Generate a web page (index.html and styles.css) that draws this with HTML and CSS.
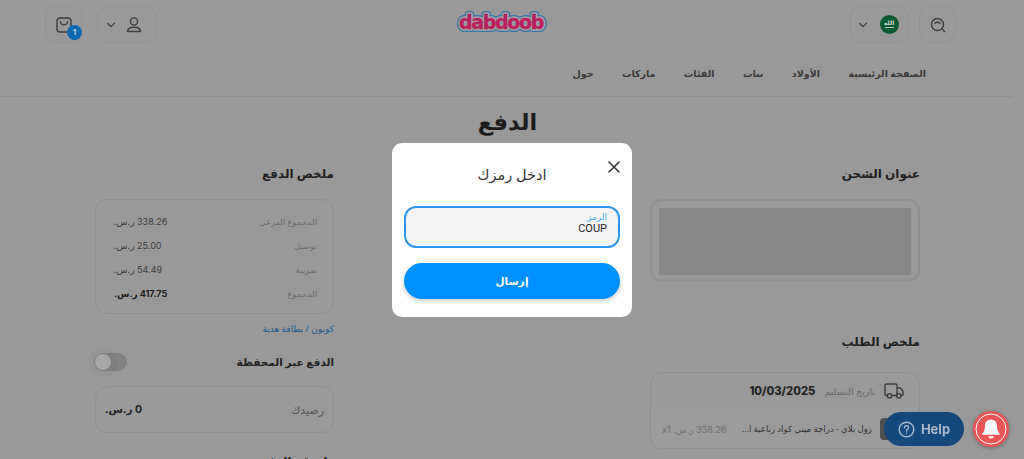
FILE: index.html
```html
<!DOCTYPE html>
<html lang="ar" dir="rtl">
<head>
<meta charset="utf-8">
<title>الدفع</title>
<link rel="stylesheet" href="styles.css">
</head>
<body>
<header class="header">
  <div class="top">
    <div class="group group-start">
      <button class="box box-sq" aria-label="بحث">
        <svg class="ic" viewBox="0 0 18 18" width="18" height="18"><circle cx="8.5" cy="8.5" r="6"/><path d="M5.8 7.2c1.6-1.2 3.8-1.2 5.4 0M13 13l2.6 2.6"/></svg>
      </button>
      <button class="box box-wide">
        <span class="flag"><span class="flag-text">الله</span><span class="flag-sword"></span></span>
        <svg class="chev" viewBox="0 0 10 6" width="10" height="6"><path d="M1.5 1.2 5 4.6l3.5-3.4"/></svg>
      </button>
    </div>
    <svg class="logo" viewBox="0 0 94 26" width="94" height="26" role="img" aria-label="dabdoob">
      <text class="logo-t logo-edge" x="47" y="19.5">dabdoob</text>
      <text class="logo-t logo-gap" x="47" y="19.5">dabdoob</text>
      <text class="logo-t logo-fill" x="47" y="19.5">dabdoob</text>
    </svg>
    <div class="group group-end">
      <button class="box box-wide box-user">
        <svg class="ic" viewBox="0 0 18 18" width="18" height="18"><circle cx="9" cy="5.5" r="3.6"/><path d="M2.5 15.5c0-3 2.600-4.200 6.500-4.200s6.500 1.200 6.500 4.200z"/></svg>
        <svg class="chev" viewBox="0 0 10 6" width="10" height="6"><path d="M1.500 1.200 5 4.600l3.500-3.400"/></svg>
      </button>
      <button class="box box-sq box-cart">
        <svg class="ic" viewBox="0 0 18 18" width="18" height="18"><rect x="2" y="2" width="14" height="14" rx="3"/><path d="M5.500 5.500c.6 4.500 6.400 4.500 7 0"/></svg>
        <span class="badge">1</span>
      </button>
    </div>
  </div>
  <nav class="nav">
    <a>الصفحة الرئيسية</a><a>الأولاد</a><a>بنات</a><a>الفئات</a><a>ماركات</a><a>حول</a>
  </nav>
</header>

<main class="main">
  <h1 class="title">الدفع</h1>
  <div class="cols">
    <section class="col col-main">
      <h2 class="h">عنوان الشحن</h2>
      <div class="card card-address"><div class="skeleton"></div></div>
      <h2 class="h h-order">ملخص الطلب</h2>
      <div class="card card-order">
        <div class="delivery">
          <svg class="truck" viewBox="0 0 20 16" width="20" height="16"><path d="M13 11.500V2.200A1.200 1.200 0 0 0 11.800 1H2.200A1.200 1.200 0 0 0 1 2.200v9.300c0 .6.500 1 1 1h1M8 12.500h5M13 5h3.500L19 8.200v3.300c0 .6-.4 1-1 1h-1"/><circle cx="5.500" cy="12.800" r="2.200"/><circle cx="14.800" cy="12.800" r="2.200"/></svg>
          <span class="muted">تاريخ التسليم</span>
          <b class="date">10/03/2025</b>
        </div>
        <div class="item">
          <span class="thumb"></span>
          <span class="item-name">رول بلاي - دراجة ميني كواد رباعية ا...</span>
          <span class="item-price">338.26 ر.س. x1</span>
        </div>
      </div>
    </section>
    <aside class="col col-side">
      <h2 class="h">ملخص الدفع</h2>
      <div class="card card-sum">
        <div class="row"><span>المجموع الفرعي</span><span class="val">338.26 ر.س.</span></div>
        <div class="row"><span>توصيل</span><span class="val">25.00 ر.س.</span></div>
        <div class="row"><span>ضريبة</span><span class="val">54.49 ر.س.</span></div>
        <div class="row row-total"><span>المجموع</span><b class="val">417.75 ر.س.</b></div>
      </div>
      <a class="coupon">كوبون / بطاقة هدية</a>
      <div class="wallet">
        <h2 class="h h-wallet">الدفع عبر المحفظة</h2>
        <span class="toggle"><span class="knob"></span></span>
      </div>
      <div class="card card-balance"><span>رصيدك</span><b>0 ر.س.</b></div>
      <h2 class="h h-method">طريقة الدفع</h2>
    </aside>
  </div>
</main>

<div class="backdrop">
  <div class="modal" role="dialog">
    <svg class="close" viewBox="0 0 12 12" width="12" height="12"><path d="M1 1l10 10M11 1 1 11"/></svg>
    <h3 class="modal-title">ادخل رمزك</h3>
    <label class="field">
      <span class="field-label">الرمز</span>
      <span class="field-value">COUP</span>
    </label>
    <button class="submit">إرسال</button>
  </div>
</div>

<button class="help" dir="ltr">
  <svg viewBox="0 0 18 18" width="17" height="17"><circle cx="9" cy="9" r="7.700"/><path d="M6.800 7.200c0-3 4.500-3 4.500-.2 0 1.700-2.300 1.700-2.300 3.500"/><circle class="dot" cx="9" cy="13" r=".7"/></svg>
  <span>Help</span>
</button>
<div class="bell">
  <svg viewBox="0 0 32 32" width="32" height="32"><circle class="bell-ring" cx="16" cy="16" r="15"/><path class="bell-body" d="M16 6.500c-3.800 0-6 2.800-6 6.300 0 4.200-.9 6.200-2.600 7.700-.5.500-.2 1.200.5 1.200h16.200c.7 0 1-.7.500-1.200-1.700-1.500-2.600-3.500-2.600-7.700 0-3.500-2.200-6.300-6-6.300z"/><path class="bell-body" d="M13.300 23.200h5.400a2.700 2.200 0 0 1-5.400 0z"/></svg>
</div>
</body>
</html>
```

FILE: styles.css
```css
* { box-sizing: border-box; }
html, body { height: 459px; overflow: hidden; }
body {
  margin: 0;
  background: #999;
  color: #222;
  font-family: "Noto Sans", "DejaVu Sans", sans-serif;
  font-size: 11px;
}
button { font: inherit; background: none; border: 0; padding: 0; color: inherit; }

.header { width: 1012px; margin-right: auto; border-bottom: 1px solid #8f8f8f; height: 97px; }
.top {
  display: flex;
  align-items: center;
  justify-content: space-between;
  padding: 6px 56px 0 45px;
}
.group { display: flex; gap: 10px; flex: 1; }
.group-end { justify-content: flex-end; gap: 15px; }
.box {
  height: 37px;
  border: 1px solid #929292;
  border-radius: 11px;
  display: flex;
  align-items: center;
  justify-content: center;
  position: relative;
}
.box-sq { width: 37px; }
.box-wide { width: 59px; gap: 12px; padding-right: 3px; }
.box-user { width: 60px; gap: 9px; padding-right: 6px; }
.ic, .chev, .truck, .close { fill: none; stroke: #3d3d3d; stroke-width: 1.400; stroke-linecap: round; stroke-linejoin: round; }
.chev { stroke-width: 1.300; }
.flag {
  width: 19px; height: 19px; border-radius: 50%;
  background: #0a5a33;
  display: flex; flex-direction: column; align-items: center; justify-content: center;
  gap: 1px;
  overflow: hidden;
}
.flag-text { font-size: 6px; line-height: 5px; color: #d8d8d8; font-weight: 700; }
.flag-sword { width: 9px; height: 1px; background: #b7c8bd; }
.badge {
  position: absolute;
  left: 21px; top: 18px;
  width: 15px; height: 15px; border-radius: 50%;
  background: #0a67b0;
  color: #c7d6e4;
  font: 700 8px/15px Inter, sans-serif;
  text-align: center;
}
.logo { display: block; margin-top: -6px; overflow: visible; }
.logo-t { font: 700 19px "DejaVu Sans", sans-serif; text-anchor: middle; letter-spacing: -1.300px; stroke-linejoin: round; }
.logo-edge { stroke: #3474a8; stroke-width: 6px; fill: #3474a8; }
.logo-gap { stroke: #a4a4a4; stroke-width: 3.500px; fill: #a4a4a4; }
.logo-fill { fill: #b81f60; stroke: #b81f60; stroke-width: .4px; }

.nav {
  display: flex;
  gap: 28.400px;
  padding: 0 86px 0 0;
  margin-top: 23px;
  line-height: 16px;
  font-size: 9.500px;
  font-weight: 700;
  color: #3a3a3a;
}

.main { padding: 0 104px 0 95px; }
.title { margin: 10px 0 0; font-size: 22.500px; line-height: 30px; text-align: center; color: #1c1c1c; }
.cols { display: flex; justify-content: space-between; margin-top: 28px; }
.col-main { width: 270px; }
.col-side { width: 239px; }
.h { margin: 0; font-size: 12px; line-height: 18px; font-weight: 700; color: #222; }
.card { border: 1px solid #8f8f8f; border-radius: 12px; }
.card-address { margin-top: 16px; height: 83px; padding: 7px 7px 5px; border-width: 2px; }
.skeleton { height: 100%; background: #888; }
.h-order { margin-top: 51px; }
.card-order { margin-top: 21px; height: 77px; overflow: hidden; }
.delivery {
  display: flex; align-items: center; height: 36px; padding: 0 15px;
  gap: 9px;
}
.muted { color: #6b6b6b; font-size: 9.500px; }
.date { font: 800 11.200px Inter, sans-serif; color: #222; }
.item {
  display: flex; align-items: center; height: 40px; padding: 0 25px 0 11px;
  background: #9b9b9b;
  gap: 8px;
  font-size: 8.600px;
}
.thumb { width: 14px; height: 22px; flex: none; background: #4f4f4f; border-radius: 4px; }
.item-name { color: #333; flex: 1; white-space: nowrap; overflow: hidden; }
.item-price { color: #707070; white-space: nowrap; font-family: Inter, "DejaVu Sans", sans-serif; font-size: 9px; }

.card-sum { margin-top: 16px; height: 115px; padding: 9px 16px 0 18px; font-size: 8.500px; color: #6e6e6e; }
.row { display: flex; justify-content: space-between; height: 24px; align-items: center; }
.val { color: #3c3c3c; font-family: Inter, "DejaVu Sans", sans-serif; font-size: 9px; }
.row-total b { color: #1c1c1c; }
.coupon { display: block; margin-top: 8px; font-size: 9px; line-height: 14px; color: #1a5a90; }
.wallet { display: flex; justify-content: space-between; align-items: center; margin-top: 17px; margin-left: -1px; }
.h-wallet { font-size: 10.500px; }
.toggle { width: 33px; height: 18px; border-radius: 9px; background: #828282; display: block; position: relative; }
.knob { position: absolute; left: 1px; top: 1px; width: 16px; height: 16px; border-radius: 50%; background: #a6a6a6; box-shadow: 0 0 0 7px rgba(0,0,0,.025); }
.card-balance {
  margin-top: 15px; height: 47px; padding: 0 9px;
  display: flex; align-items: center; justify-content: space-between;
  font-size: 11px; color: #555;
}
.card-balance b { color: #222; font-family: Inter, "DejaVu Sans", sans-serif; font-size: 10.500px; }
.h-method { margin-top: 20px; }

.backdrop { position: fixed; inset: 0; }
.modal {
  position: absolute; left: 392px; top: 143px;
  width: 240px; height: 174px;
  background: #fff;
  border-radius: 10px;
  padding: 19px 12px 0;
}
.close { position: absolute; left: 216px; top: 18px; stroke: #333; stroke-width: 1.600; }
.modal-title { margin: 0; font-size: 14.500px; line-height: 24px; font-weight: 400; text-align: center; color: #333; }
.field {
  display: block;
  margin-top: 20px;
  height: 42px;
  border: 2px solid #2a98f0;
  border-radius: 12px;
  background: #f4f4f4;
  padding: 3px 11px 0;
}
.field-label { display: block; font-size: 9px; line-height: 11px; color: #4aa9f5; }
.field-value { display: block; font: 400 11px/13px Roboto, sans-serif; color: #222; }
.submit {
  display: block;
  width: 100%;
  height: 36px;
  margin-top: 15px;
  border-radius: 18px;
  background: #0090ff;
  color: #fff;
  font-size: 10.500px;
  font-weight: 700;
  box-shadow: 0 2px 4px rgba(0,0,0,.2);
}

.help {
  position: fixed; left: 884px; top: 412px;
  width: 80px; height: 34px; border-radius: 17px;
  background: #15497c;
  color: #a9bbcc;
  display: flex; align-items: center; justify-content: center; gap: 6px;
  font: 700 13px Inter, sans-serif;
}
.help svg { fill: none; stroke: #a9bbcc; stroke-width: 1.500; stroke-linecap: round; }
.help .dot { fill: #a9bbcc; stroke: none; }
.bell {
  position: fixed; left: 973px; top: 411px;
  width: 36px; height: 36px; border-radius: 50%;
  background: #e85555;
  display: flex; align-items: center; justify-content: center;
  box-shadow: 0 1px 4px rgba(0,0,0,.3);
}
.bell-ring { fill: none; stroke: #fff; stroke-width: 1; }
.bell-body { fill: #fff; }
```
